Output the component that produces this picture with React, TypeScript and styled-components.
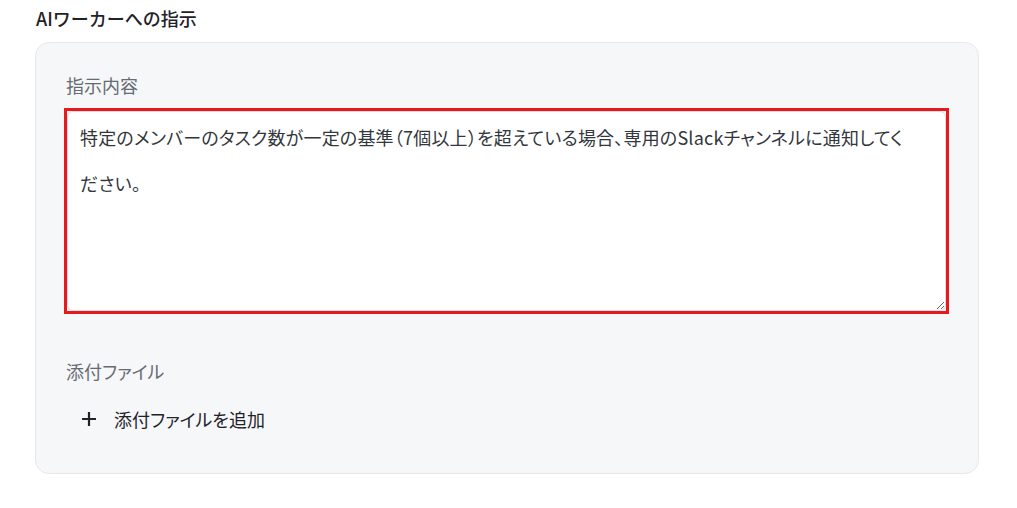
import styled, { createGlobalStyle } from "styled-components";

const GlobalStyle = createGlobalStyle`
   body {
      margin: 0;
      background: #ffffff;
      font-family: "Noto Sans CJK JP", "Noto Sans", sans-serif;
   }
`;

const Page = styled.div`
   width: 1017px;
   height: 508px;
   padding: 5px 38px 0 35px;
   box-sizing: border-box;
`;

const Title = styled.h2`
   margin: 0 0 11px 1px;
   font-size: 18px;
   font-weight: 500;
   line-height: 26px;
   color: #1f2329;
`;

const Card = styled.section`
   background: #f6f7f9;
   border: 1px solid #e6e8ec;
   border-radius: 14px;
   padding: 30px;
   height: 432px;
   box-sizing: border-box;
`;

const FieldLabel = styled.div<{ $gap: number }>`
   font-size: 18px;
   font-feature-settings: "palt";
   line-height: 24px;
   color: #666b73;
   margin-bottom: ${(p) => p.$gap}px;
`;

const Highlight = styled.div`
   border: 3px solid #e8191c;
   margin-left: -2px;
   width: 885px;
   box-sizing: border-box;
   margin-bottom: 45px;
`;

const TextArea = styled.textarea`
   display: block;
   width: 100%;
   height: 200px;
   box-sizing: border-box;
   margin: 0;
   padding: 2px 40px 0 12px;
   border: 1px solid #d9dce1;
   border-radius: 6px;
   background: #ffffff;
   font-family: "Noto Sans CJK JP", "Noto Sans", sans-serif;
   font-size: 18px;
   font-feature-settings: "palt";
   letter-spacing: 0.2px;
   line-height: 46px;
   color: #33373d;
   resize: vertical;
   outline: none;
`;

const AddButton = styled.button`
   display: flex;
   align-items: center;
   gap: 17px;
   margin: 0 0 0 15px;
   padding: 0;
   border: none;
   background: none;
   font-family: "Noto Sans CJK JP", "Noto Sans", sans-serif;
   font-size: 18px;
   font-feature-settings: "palt";
   line-height: 24px;
   color: #1f2329;
   cursor: pointer;
`;

const PlusIcon = () => (
   <svg width="16" height="16" viewBox="0 0 16 16">
      <path d="M8 1v14M1 8h14" stroke="#1f2329" strokeWidth="2.2" />
   </svg>
);

const App = () => {
   return (
      <>
         <GlobalStyle />
         <Page>
            <Title>AIワーカーへの指示</Title>
            <Card>
               <FieldLabel $gap={11}>指示内容</FieldLabel>
               <Highlight>
                  <TextArea
                     readOnly
                     defaultValue="特定のメンバーのタスク数が一定の基準（7個以上）を超えている場合、専用のSlackチャンネルに通知してください。"
                  />
               </Highlight>
               <FieldLabel $gap={24}>添付ファイル</FieldLabel>
               <AddButton>
                  <PlusIcon />
                  添付ファイルを追加
               </AddButton>
            </Card>
         </Page>
      </>
   );
};

export default App;
